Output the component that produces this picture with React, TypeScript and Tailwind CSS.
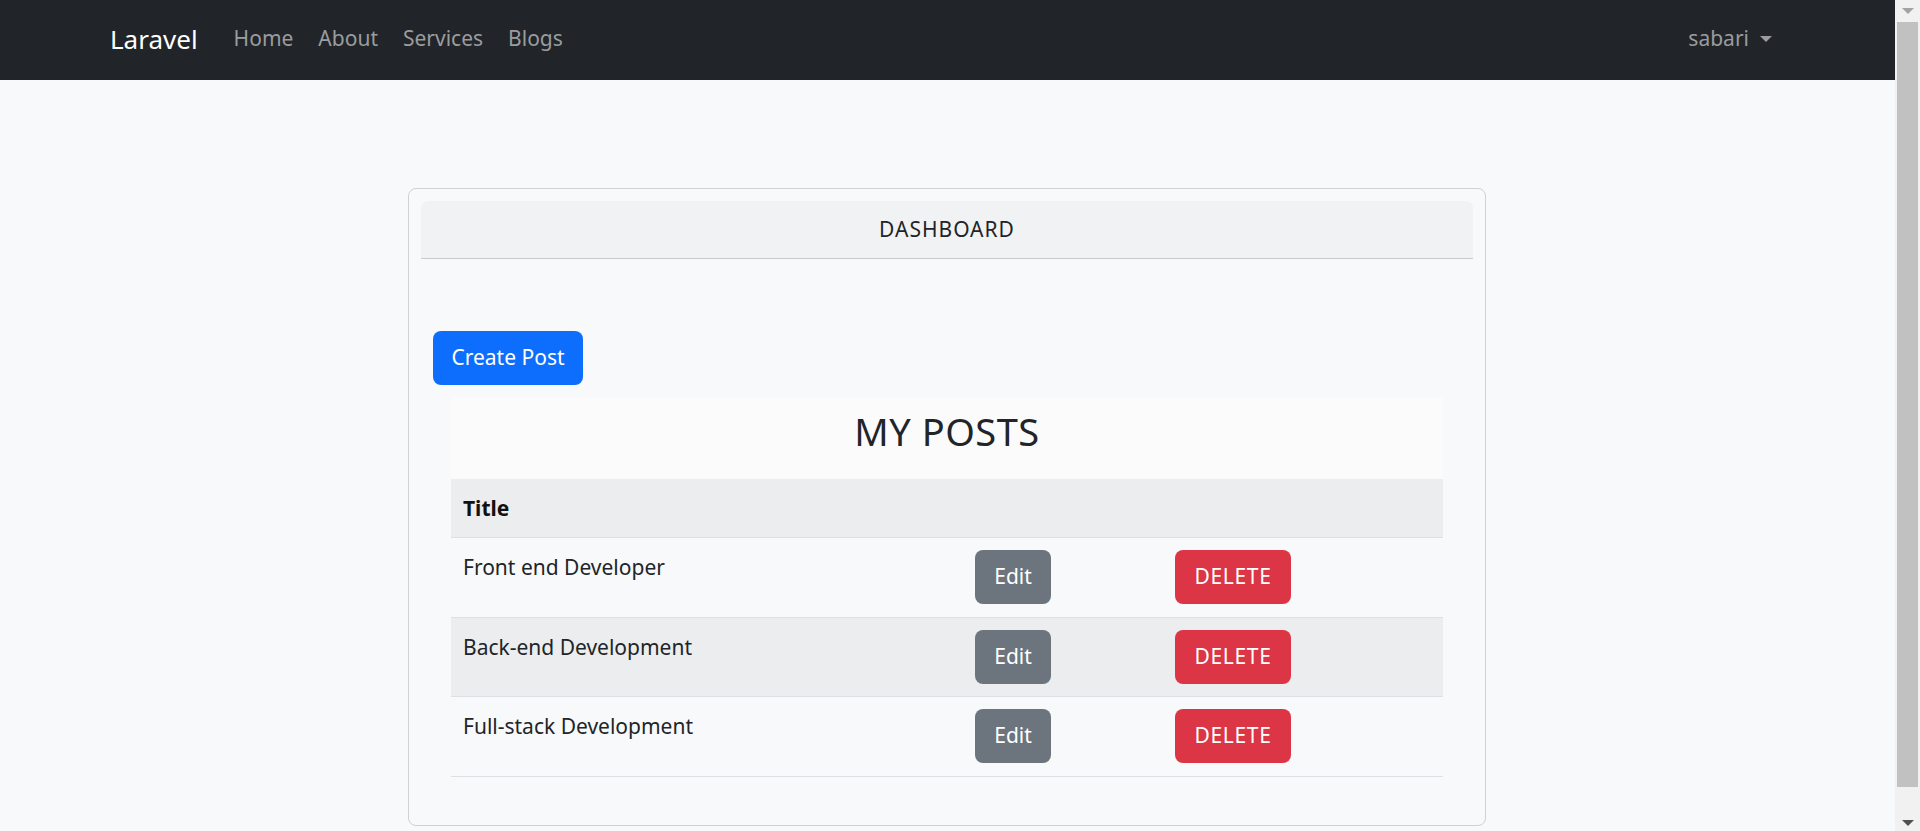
import React from "react";

const posts = [
  { title: "Front end Developer", row: "h-[80px] bg-[#f8f9fa]" },
  { title: "Back-end Development", row: "h-[79px] bg-[#ecedee]" },
  { title: "Full-stack Development", row: "h-[80px] bg-[#f8f9fa]" },
];

function Caret({ color }: { color: string }) {
  return (
    <svg width="12" height="6" viewBox="0 0 12 6">
      <path d="M0 0H12L6 6Z" fill={color} />
    </svg>
  );
}

export default function App() {
  return (
    <div className="w-[1920px] h-[831px] overflow-hidden flex bg-[#f8f9fa] font-['Noto_Sans',sans-serif] text-[#212529]">
      <div className="flex-1 min-w-0 flex flex-col">
        <nav className="h-[80px] shrink-0 bg-[#212529] flex items-center pl-[110px] pr-[123px]">
          <span className="text-[26px] leading-none text-white pb-[3px]">Laravel</span>
          <div className="flex ml-[36px] gap-[25px] text-[21px] leading-none text-[#9a9c9e] pb-[3px]">
            <span>Home</span>
            <span>About</span>
            <span>Services</span>
            <span>Blogs</span>
          </div>
          <div className="ml-auto flex items-center gap-[11px] text-[21px] leading-none text-[#9a9c9e] pb-[3px]">
            <span>sabari</span>
            <Caret color="#9a9c9e" />
          </div>
        </nav>

        <main className="flex justify-center pt-[108px] pr-[1px]">
          <div className="w-[1078px] h-[638px] border border-[#d0d1d3] rounded-[8px] px-[12px] pt-[12px] flex flex-col">
            <div className="h-[58px] shrink-0 bg-[#f1f2f3] border-b border-[#c9cacc] rounded-t-[7px] flex items-center justify-center text-[21px] tracking-[1px] text-[#212529]">
              DASHBOARD
            </div>

            <div className="px-[12px] pt-[72px]">
              <button className="w-[150px] h-[54px] rounded-[8px] bg-[#0d6efd] text-white text-[21px] flex items-center justify-center">
                Create Post
              </button>

              <div className="mx-[18px] mt-[12px]">
                <div className="h-[82px] bg-[#fbfbfc] flex items-center justify-center pb-[14px]">
                  <h2 className="text-[38px] leading-none tracking-[0.5px] text-[#212529]">MY POSTS</h2>
                </div>

                <div className="h-[59px] bg-[#ecedee] border-b border-[#dee0e3] grid grid-cols-[512px_200px_1fr]">
                  <div className="px-[12px] pt-[12px] leading-[35px] text-[21px] font-bold text-[#111]">Title</div>
                  <div />
                  <div />
                </div>

                {posts.map((p) => (
                  <div
                    key={p.title}
                    className={`${p.row} border-b border-[#dee0e3] grid grid-cols-[512px_200px_1fr]`}
                  >
                    <div className="px-[12px] pt-[12px] leading-[35px] text-[21px] text-[#212529]">{p.title}</div>
                    <div className="px-[12px] pt-[12px]">
                      <button className="w-[76px] h-[54px] rounded-[8px] bg-[#6c757d] text-white text-[21px] flex items-center justify-center">
                        Edit
                      </button>
                    </div>
                    <div className="px-[12px] pt-[12px]">
                      <button className="w-[116px] h-[54px] rounded-[8px] bg-[#dc3545] text-white text-[21px] tracking-[0.7px] flex items-center justify-center">
                        DELETE
                      </button>
                    </div>
                  </div>
                ))}
              </div>
            </div>
          </div>
        </main>
      </div>

      <div className="w-[25px] h-[831px] shrink-0 bg-[#f1f1f1] flex flex-col items-center">
        <div className="h-[22px] w-full flex items-center justify-center">
          <Caret color="#a3a3a3" />
        </div>
        <div className="w-[21px] h-[765px] bg-[#c1c1c1]" />
        <div className="flex-1 w-full flex items-end justify-center pb-[5px]">
          <svg width="12" height="6" viewBox="0 0 12 6">
            <path d="M0 0H12L6 6Z" fill="#505050" />
          </svg>
        </div>
      </div>
    </div>
  );
}
